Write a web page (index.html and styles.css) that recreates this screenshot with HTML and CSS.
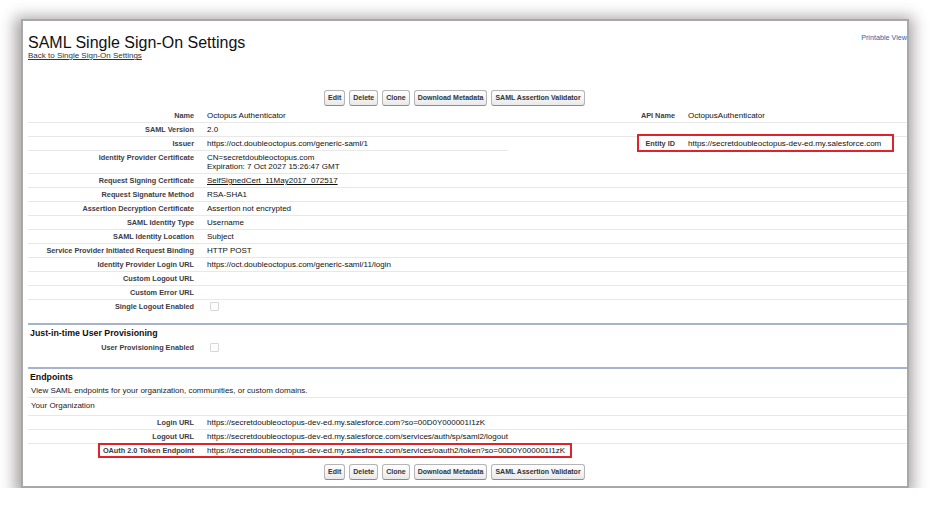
FILE: index.html
```html
<!DOCTYPE html>
<html>
<head>
<meta charset="utf-8">
<link rel="stylesheet" href="styles.css">
</head>
<body>
<div class="page">
  <div class="frame">
    <div class="head">
      <div class="titles">
        <h1 class="title">SAML Single Sign-On Settings</h1>
        <a class="back">Back to Single Sign-On Settings</a>
      </div>
      <a class="printable">Printable View</a>
    </div>

    <div class="btnbar top">
      <button class="btn">Edit</button>
      <button class="btn">Delete</button>
      <button class="btn">Clone</button>
      <button class="btn">Download Metadata</button>
      <button class="btn">SAML Assertion Validator</button>
    </div>

    <div class="detail">
      <div class="lbl">Name</div>
      <div class="val">Octopus Authenticator</div>
      <div class="lbl lbl2">API Name</div>
      <div class="val val2">OctopusAuthenticator</div>

      <div class="lbl">SAML Version</div>
      <div class="val">2.0</div>
      <div class="lbl lbl2"></div>
      <div class="val val2"></div>

      <div class="lbl">Issuer</div>
      <div class="val">https://oct.doubleoctopus.com/generic-saml/1</div>
      <div class="annot">
        <div class="mark"></div>
        <div class="annot-row">
          <div class="lbl lbl2 nob over">Entity ID</div>
          <div class="val val2 nob over">https://secretdoubleoctopus-dev-ed.my.salesforce.com</div>
        </div>
      </div>

      <div class="lbl">Identity Provider Certificate</div>
      <div class="val multi">CN=secretdoubleoctopus.com<br>Expiration: 7 Oct 2027 15:26:47 GMT</div>
      <div class="lbl lbl2"></div>
      <div class="val val2"></div>

      <div class="lbl">Request Signing Certificate</div>
      <div class="val"><span class="ul">SelfSignedCert_11May2017_072517</span></div>
      <div class="lbl lbl2"></div>
      <div class="val val2"></div>

      <div class="lbl">Request Signature Method</div>
      <div class="val">RSA-SHA1</div>
      <div class="lbl lbl2"></div>
      <div class="val val2"></div>

      <div class="lbl">Assertion Decryption Certificate</div>
      <div class="val">Assertion not encrypted</div>
      <div class="lbl lbl2"></div>
      <div class="val val2"></div>

      <div class="lbl">SAML Identity Type</div>
      <div class="val">Username</div>
      <div class="lbl lbl2"></div>
      <div class="val val2"></div>

      <div class="lbl">SAML Identity Location</div>
      <div class="val">Subject</div>
      <div class="lbl lbl2"></div>
      <div class="val val2"></div>

      <div class="lbl">Service Provider Initiated Request Binding</div>
      <div class="val">HTTP POST</div>
      <div class="lbl lbl2"></div>
      <div class="val val2"></div>

      <div class="lbl">Identity Provider Login URL</div>
      <div class="val">https://oct.doubleoctopus.com/generic-saml/11/login</div>
      <div class="lbl lbl2"></div>
      <div class="val val2"></div>

      <div class="lbl">Custom Logout URL</div>
      <div class="val"></div>
      <div class="lbl lbl2"></div>
      <div class="val val2"></div>

      <div class="lbl">Custom Error URL</div>
      <div class="val"></div>
      <div class="lbl lbl2"></div>
      <div class="val val2"></div>

      <div class="lbl nob">Single Logout Enabled</div>
      <div class="val nob"><span class="cb"></span></div>
      <div class="lbl lbl2 nob"></div>
      <div class="val val2 nob"></div>
    </div>

    <div class="section prov">
      <div class="sechead">Just-in-time User Provisioning</div>
      <div class="pair">
        <div class="lbl nob">User Provisioning Enabled</div>
        <div class="val nob"><span class="cb"></span></div>
      </div>
    </div>

    <div class="section endpoints">
      <div class="sechead">Endpoints</div>
      <div class="desc">View SAML endpoints for your organization, communities, or custom domains.</div>
      <div class="org">Your Organization</div>
      <div class="pair">
        <div class="lbl">Login URL</div>
        <div class="val">https://secretdoubleoctopus-dev-ed.my.salesforce.com?so=00D0Y000001I1zK</div>

        <div class="lbl">Logout URL</div>
        <div class="val">https://secretdoubleoctopus-dev-ed.my.salesforce.com/services/auth/sp/saml2/logout</div>

        <div class="lbl nob marked"><span class="mark2"></span>OAuth 2.0 Token Endpoint</div>
        <div class="val nob">https://secretdoubleoctopus-dev-ed.my.salesforce.com/services/oauth2/token?so=00D0Y000001I1zK</div>
      </div>
    </div>

    <div class="btnbar bottom">
      <button class="btn">Edit</button>
      <button class="btn">Delete</button>
      <button class="btn">Clone</button>
      <button class="btn">Download Metadata</button>
      <button class="btn">SAML Assertion Validator</button>
    </div>
  </div>
</div>
</body>
</html>
```

FILE: styles.css
```css
html, body {
  margin: 0;
  padding: 0;
  background: #ffffff;
  font-family: "Liberation Sans", Arial, sans-serif;
}

.page {
  padding: 19px 0 0 21px;
}

.frame {
  width: 884px;
  height: 465px;
  border: 2px solid #a8a8a8;
  background: #ffffff;
  box-shadow: -1px 3px 14px 5px rgba(60, 48, 48, 0.45);
  overflow: hidden;
}

.head {
  display: flex;
  justify-content: space-between;
  align-items: flex-start;
  padding-left: 5px;
}

.title {
  margin: 13px 0 0;
  font-size: 16px;
  line-height: 18px;
  font-weight: normal;
  color: #111111;
}

.back {
  display: block;
  margin-top: -1px;
  font-size: 8px;
  line-height: 10px;
  color: #333333;
  text-decoration: underline;
}

.printable {
  margin-top: 11.5px;
  font-size: 7.2px;
  line-height: 10px;
  color: #2a66a8;
  white-space: nowrap;
}

.btnbar {
  display: flex;
  gap: 4px;
  padding-left: 301px;
}

.btnbar.top {
  margin-top: 29px;
}

.btnbar.bottom {
  margin-top: 7.5px;
}

.btn {
  height: 16px;
  box-sizing: border-box;
  margin: 0;
  padding: 0 3px;
  font-family: "Liberation Sans", Arial, sans-serif;
  font-size: 7px;
  font-weight: bold;
  line-height: 14px;
  color: #333333;
  border: 1px solid #b5b5b5;
  border-bottom-color: #8c8c8c;
  border-radius: 3px;
  background: linear-gradient(#ffffff, #e9e9e9);
  white-space: nowrap;
}

.detail {
  display: grid;
  grid-template-columns: 172px 308px 174px 225px;
  margin: 3px 0 0 5px;
  padding-bottom: 10px;
}

.lbl {
  text-align: right;
  padding-right: 6px;
  font-size: 7.3px;
  font-weight: bold;
  line-height: 13px;
  color: #3c3c46;
  border-bottom: 1px solid #e8e8e8;
  white-space: nowrap;
}

.val {
  padding-left: 7px;
  font-size: 8px;
  line-height: 13px;
  color: #111111;
  border-bottom: 1px solid #e8e8e8;
  white-space: nowrap;
}

.lbl2 {
  padding-right: 7px;
}

.val2 {
  padding-left: 6px;
}

.nob {
  border-bottom: none;
}

.multi {
  line-height: 9.5px;
  padding-top: 1.5px;
  padding-bottom: 1.5px;
}

.ul {
  text-decoration: underline;
}

.annot {
  grid-column: span 2;
  position: relative;
}

.annot-row {
  display: grid;
  grid-template-columns: 174px 225px;
}

.over {
  position: relative;
  z-index: 1;
}

.mark {
  position: absolute;
  left: 129px;
  top: -3px;
  width: 257px;
  height: 18px;
  box-sizing: border-box;
  border: 2px solid #e2222b;
  background: #ffffff;
  z-index: 0;
}

.cb {
  display: inline-block;
  width: 7px;
  height: 7px;
  margin-left: 3px;
  border: 1px solid #d8d8d8;
  border-radius: 1px;
  background: #fcfcfc;
  vertical-align: middle;
}

.section {
  margin-left: 5px;
  width: 879px;
  border-top: 2px solid #a7b3cd;
}

.sechead {
  padding: 2px 0 0 2px;
  font-size: 8.8px;
  font-weight: bold;
  line-height: 12px;
  color: #111111;
}

.prov {
  padding-bottom: 13px;
}

.pair {
  display: grid;
  grid-template-columns: 172px 707px;
}

.prov .pair {
  margin-top: 2px;
}

.desc {
  padding: 1.5px 0 0 3px;
  font-size: 8px;
  line-height: 12px;
  color: #222222;
  border-bottom: 1px solid #e8e8e8;
}

.org {
  padding: 1px 0 3px 3px;
  font-size: 8px;
  line-height: 13px;
  color: #222222;
  border-bottom: 1px solid #e8e8e8;
}

.marked {
  position: relative;
}

.mark2 {
  position: absolute;
  left: 70px;
  top: -1px;
  width: 474px;
  height: 15px;
  box-sizing: border-box;
  border: 2px solid #e2222b;
}
```
